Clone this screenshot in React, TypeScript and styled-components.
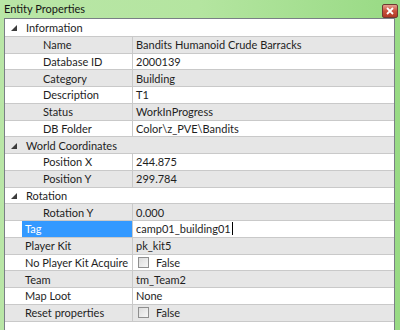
import styled, { createGlobalStyle } from "styled-components";

const GlobalStyle = createGlobalStyle`
	body {
		margin: 0;
		font-family: "Segoe UI", Lato, "Noto Sans", sans-serif;
		font-size: 11px;
		color: #1e1e1e;
	}
`;

type Item =
	| { kind: "category"; label: string }
	| { kind: "sub" | "top"; label: string; value: string; check?: boolean; selected?: boolean };

const items: Item[] = [
	{ kind: "category", label: "Information" },
	{ kind: "sub", label: "Name", value: "Bandits Humanoid Crude Barracks" },
	{ kind: "sub", label: "Database ID", value: "2000139" },
	{ kind: "sub", label: "Category", value: "Building" },
	{ kind: "sub", label: "Description", value: "T1" },
	{ kind: "sub", label: "Status", value: "WorkInProgress" },
	{ kind: "sub", label: "DB Folder", value: "Color\\z_PVE\\Bandits" },
	{ kind: "category", label: "World Coordinates" },
	{ kind: "sub", label: "Position X", value: "244.875" },
	{ kind: "sub", label: "Position Y", value: "299.784" },
	{ kind: "category", label: "Rotation" },
	{ kind: "sub", label: "Rotation Y", value: "0.000" },
	{ kind: "top", label: "Tag", value: "camp01_building01", selected: true },
	{ kind: "top", label: "Player Kit", value: "pk_kit5" },
	{ kind: "top", label: "No Player Kit Acquire", value: "False", check: true },
	{ kind: "top", label: "Team", value: "tm_Team2" },
	{ kind: "top", label: "Map Loot", value: "None" },
	{ kind: "top", label: "Reset properties", value: "False", check: true },
];

export default function App() {
	return (
		<>
			<GlobalStyle />
			<Frame>
				<TitleBar>
					<Title>Entity Properties</Title>
					<CloseButton>
						<svg width="8" height="8" viewBox="0 0 8 8">
							<path d="M1 1 L7 7 M7 1 L1 7" stroke="#fff" strokeWidth="1.8" />
						</svg>
					</CloseButton>
				</TitleBar>
				<Panel>
					{items.map((item, i) => {
						const stripe = i % 2 === 1;
						if (item.kind === "category") {
							return (
								<CategoryRow key={item.label} $stripe={stripe}>
									<Expander>
										<svg width="6" height="6" viewBox="0 0 6 6">
											<polygon points="6,0 6,6 0,6" fill="#3c3c3c" />
										</svg>
									</Expander>
									{item.label}
								</CategoryRow>
							);
						}
						return (
							<Row key={item.label} $stripe={stripe}>
								<LabelCell $indent={item.kind === "sub" ? 35 : 17}>
									<LabelText $selected={item.selected}>{item.label}</LabelText>
								</LabelCell>
								<ValueCell $editing={item.selected}>
									{item.check && <CheckBox />}
									{item.value}
									{item.selected && <Caret />}
								</ValueCell>
							</Row>
						);
					})}
				</Panel>
			</Frame>
		</>
	);
}

const Frame = styled.div`
	width: 400px;
	height: 330px;
	display: flex;
	flex-direction: column;
	overflow: hidden;
	padding: 0 5px 0 4px;
	box-sizing: border-box;
	background: linear-gradient(90deg, #b9e6a6 0%, #b4e5a0 50%, #98da84 100%);
`;

const TitleBar = styled.div`
	height: 18px;
	display: flex;
	align-items: center;
	justify-content: space-between;
	flex-shrink: 0;
`;

const Title = styled.span`
	font-size: 11px;
	color: #151515;
	margin-top: -2px;
`;

const CloseButton = styled.div`
	width: 14px;
	height: 12px;
	margin-right: -3px;
	margin-top: 3px;
	border: 1px solid #6e3a32;
	border-radius: 2px;
	background: linear-gradient(180deg, #e5a08f 0%, #c8503c 50%, #b13a26 100%);
	display: flex;
	align-items: center;
	justify-content: center;
`;

const Panel = styled.div`
	flex: 1;
	background: #fff;
	border: 1px solid #7a7f86;
	border-bottom: none;
	padding-top: 1px;
	display: grid;
	grid-auto-rows: 16.76px;
	align-content: start;
`;

const CategoryRow = styled.div<{ $stripe: boolean }>`
	display: flex;
	align-items: center;
	padding-left: 6px;
	background: ${(p) => (p.$stripe ? "#e6e6e6" : "#fff")};
	border-bottom: 1px solid #c9c9c9;
	box-sizing: border-box;
	white-space: nowrap;
`;

const Expander = styled.span`
	width: 15px;
	display: flex;
	align-items: center;
	margin-top: 1px;
`;

const Row = styled.div<{ $stripe: boolean }>`
	display: grid;
	grid-template-columns: 128px 1fr;
	background: ${(p) => (p.$stripe ? "#e6e6e6" : "#fff")};
	border-bottom: 1px solid #c9c9c9;
	box-sizing: border-box;
	white-space: nowrap;
`;

const LabelCell = styled.div<{ $indent: number }>`
	display: flex;
	padding-left: ${(p) => p.$indent}px;
	border-right: 1px solid #c9c9c9;
`;

const LabelText = styled.span<{ $selected?: boolean }>`
	flex: 1;
	display: flex;
	align-items: center;
	padding-left: 3px;
	overflow: hidden;
	background: ${(p) => (p.$selected ? "#3399ff" : "transparent")};
	color: ${(p) => (p.$selected ? "#fff" : "inherit")};
`;

const ValueCell = styled.div<{ $editing?: boolean }>`
	display: flex;
	align-items: center;
	padding-left: 3px;
	background: ${(p) => (p.$editing ? "#fff" : "transparent")};
`;

const CheckBox = styled.span`
	width: 9px;
	height: 9px;
	margin: 0 7px 0 2px;
	border: 1px solid #8f8f8f;
	background: linear-gradient(135deg, #dcdcdc 0%, #f6f6f6 100%);
`;

const Caret = styled.span`
	width: 1px;
	height: 13px;
	background: #000;
	margin-left: 1px;
`;
